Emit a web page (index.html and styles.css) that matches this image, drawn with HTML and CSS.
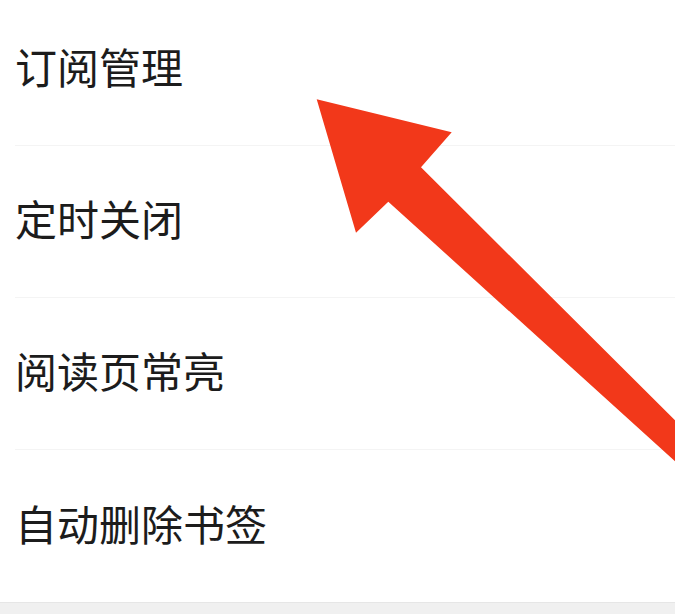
FILE: index.html
```html
<!DOCTYPE html>
<html lang="zh-CN">
<head>
<meta charset="utf-8">
<title>设置</title>
<link rel="stylesheet" href="styles.css">
</head>
<body>
<div class="page">
  <ul class="menu">
    <li class="item"><span class="label">订阅管理</span></li>
    <li class="item"><span class="label">定时关闭</span></li>
    <li class="item"><span class="label">阅读页常亮</span></li>
    <li class="item last"><span class="label">自动删除书签</span></li>
  </ul>
  <div class="footer"></div>
  <svg class="arrow" width="675" height="614" viewBox="0 0 675 614" xmlns="http://www.w3.org/2000/svg">
    <polygon fill="#f2381a" points="316.7,99.3 451.7,132.3 421,167.3 720,465 720,502 388.3,201.7 356,232.7"/>
  </svg>
</div>
</body>
</html>
```
FILE: styles.css
```css
html, body {
  margin: 0;
  padding: 0;
  background: #ffffff;
}
.page {
  position: relative;
  width: 675px;
  height: 614px;
  overflow: hidden;
  display: flex;
  flex-direction: column;
}
.menu {
  list-style: none;
  margin: -6px 0 0 15px;
  padding: 0;
}
.item {
  height: 144px;
  padding-bottom: 7px;
  border-bottom: 1px solid #f4f4f4;
  display: flex;
  align-items: center;
}
.item.last {
  border-bottom: none;
  height: 145px;
}
.label {
  font-family: "Noto Sans CJK SC", "Noto Sans", sans-serif;
  font-size: 42px;
  line-height: 1;
  color: #1c1c1c;
}
.footer {
  flex: 1;
  background: #f0f0f0;
  border-top: 1px solid #e6e6e6;
}
.arrow {
  position: absolute;
  left: 0;
  top: 0;
}
```
